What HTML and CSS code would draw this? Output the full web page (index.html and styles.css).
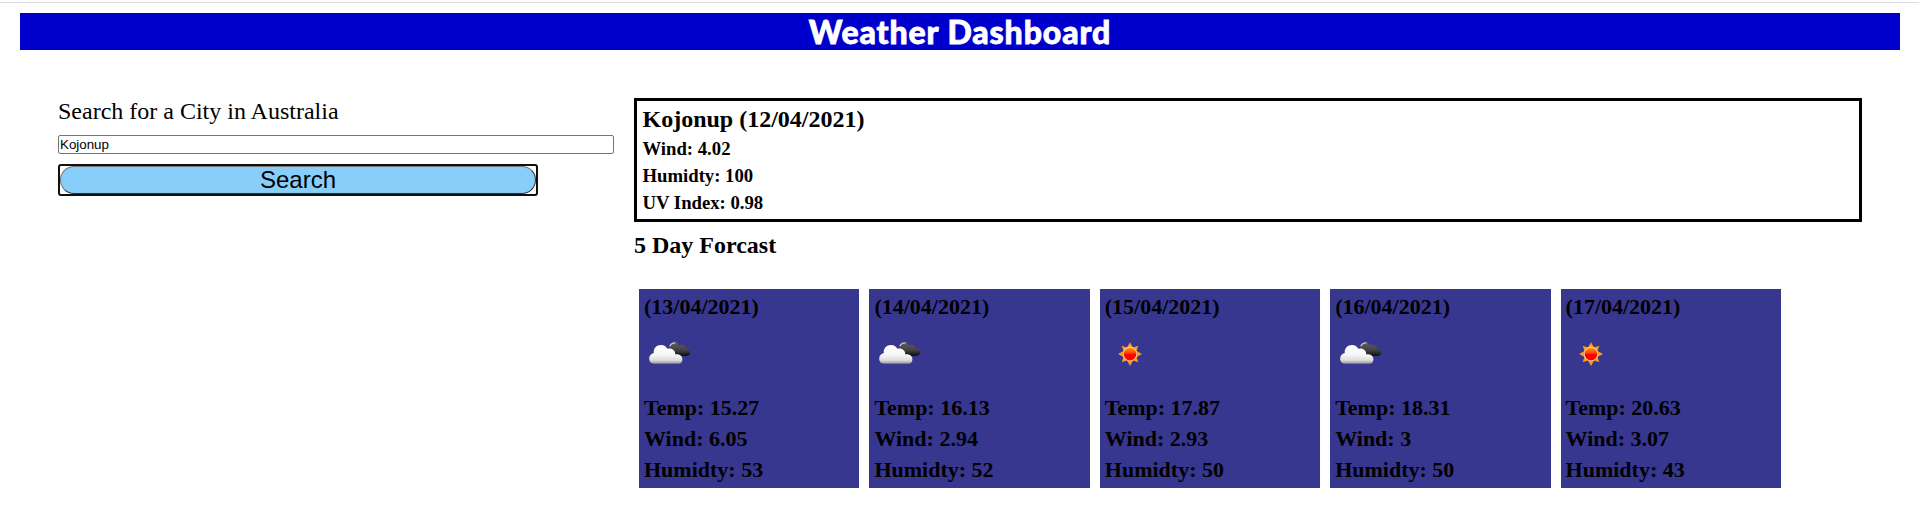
FILE: index.html
```html
<!DOCTYPE html>
<html lang="en">
<head>
<meta charset="utf-8">
<title>Weather Dashboard</title>
<link rel="stylesheet" href="styles.css">
</head>
<body>
<svg class="defs" width="0" height="0" aria-hidden="true">
  <defs>
    <linearGradient id="white-cloud" x1="0" y1="0" x2="0" y2="1">
      <stop offset="0" stop-color="#fff"/><stop offset=".5" stop-color="#f8f8f8"/>
      <stop offset=".8" stop-color="#ddd"/><stop offset=".93" stop-color="#aaa"/><stop offset="1" stop-color="#666"/>
    </linearGradient>
    <linearGradient id="dark-cloud" x1="0" y1="0" x2="0" y2="1">
      <stop offset="0" stop-color="#606060"/><stop offset=".6" stop-color="#404040"/><stop offset="1" stop-color="#0c0c0c"/>
    </linearGradient>
    <linearGradient id="sun-core" x1="0" y1="0" x2="0" y2="1">
      <stop offset="0" stop-color="#ff9a00"/><stop offset=".4" stop-color="#ff4a00"/><stop offset=".55" stop-color="#f00"/>
    </linearGradient>
    <symbol id="clouds" viewBox="0 0 50 50">
      <path fill="url(#dark-cloud)" d="M25 17.5C26 14.5 27.8 13.2 30 13.2C32.5 13.2 34.3 14.3 35.2 16.2C38 14.8 41.4 16.2 42 19.3C45 19.6 46.6 21.4 46.4 23.6C46.2 25.6 44.6 27 42 27H32Z"/>
      <path fill="none" stroke="#c8c8c8" stroke-width="1.2" d="M25.8 17.2C27 14.6 28.5 13.6 31.5 13.8"/>
      <path fill="url(#white-cloud)" d="M10.5 35C7.2 35 5.2 32.8 5.2 29.6C5.2 26.5 7 24.4 9.8 23.9C9.2 19.2 12.6 15.9 17 15.9C20 15.9 22.2 17.2 23.3 19.8C27.6 18.7 31.6 21.3 31.2 25.4C35.4 25 38.4 27 38.4 30.5C38.4 33.2 36.6 35 34 35Z"/>
    </symbol>
    <symbol id="sun" viewBox="0 0 50 50">
      <path fill="#f99b1c" d="M25 13.2 28 18.6 33.3 16.7 31.5 22 37 25 31.5 28 33.3 33.3 28 31.5 25 37 22 31.5 16.7 33.3 18.5 28 13 25 18.5 22 16.7 16.7 22 18.6Z"/>
      <circle cx="25" cy="25" r="7.2" fill="#ffe6b8"/>
      <circle cx="25" cy="25" r="6.4" fill="url(#sun-core)"/>
    </symbol>
  </defs>
</svg>
<header class="banner"><h1>Weather Dashboard</h1></header>
<main class="layout">
  <form class="search">
    <label class="search-label" for="city">Search for a City in Australia</label>
    <input class="search-input" id="city" type="text" value="Kojonup">
    <div class="focus-ring"><button class="search-button" type="button">Search</button></div>
  </form>
  <div class="results">
    <section class="current">
      <h2>Kojonup (12/04/2021)</h2>
      <p>Wind: 4.02</p>
      <p>Humidty: 100</p>
      <p>UV Index: 0.98</p>
    </section>
    <h2 class="forecast-title">5 Day Forcast</h2>
    <section class="forecast">
      <article class="day"><p>(13/04/2021)</p><svg class="icon"><use href="#clouds"/></svg><p>Temp: 15.27</p><p>Wind: 6.05</p><p>Humidty: 53</p></article>
      <article class="day"><p>(14/04/2021)</p><svg class="icon"><use href="#clouds"/></svg><p>Temp: 16.13</p><p>Wind: 2.94</p><p>Humidty: 52</p></article>
      <article class="day"><p>(15/04/2021)</p><svg class="icon"><use href="#sun"/></svg><p>Temp: 17.87</p><p>Wind: 2.93</p><p>Humidty: 50</p></article>
      <article class="day"><p>(16/04/2021)</p><svg class="icon"><use href="#clouds"/></svg><p>Temp: 18.31</p><p>Wind: 3</p><p>Humidty: 50</p></article>
      <article class="day"><p>(17/04/2021)</p><svg class="icon"><use href="#sun"/></svg><p>Temp: 20.63</p><p>Wind: 3.07</p><p>Humidty: 43</p></article>
    </section>
  </div>
</main>
</body>
</html>
```
FILE: styles.css
```css
* { box-sizing: border-box; }
html { border-top: 2px solid #fff; background: #fff; }
body {
  margin: 0;
  border-top: 1px solid #dadce0;
  padding: 10px 19px 0 20px;
  font-family: "Liberation Serif", "Times New Roman", serif;
  color: #000;
}
h1, h2, p { margin: 0; }
.defs { position: absolute; }
.banner {
  height: 37px;
  background: #0000cd;
  color: #fff;
  text-align: center;
}
.banner h1 {
  font: 900 32px/38px Lato, "Gill Sans", sans-serif;
  letter-spacing: 0.9px;
  -webkit-text-stroke: 0.8px #fff;
}
.layout {
  display: flex;
  gap: 20px;
  padding: 46px 38px 0;
}
.search {
  width: 556px;
  display: flex;
  flex-direction: column;
  align-items: flex-start;
}
.search-label { font-size: 24px; line-height: 30px; }
.search-input {
  width: 100%;
  height: 19px;
  margin: 9px 0 10px;
  padding: 0 1px;
  border: 1px solid #767676;
  border-radius: 2px;
  font: 13.333px "Liberation Sans", Arial, sans-serif;
}
.focus-ring {
  width: 480px;
  height: 32px;
  border: 2px solid #101010;
  border-radius: 3px;
}
.search-button {
  display: block;
  width: 476px;
  height: 28px;
  padding: 0;
  border: 1px solid;
  border-color: #767676 #303030 #303030 #767676;
  border-radius: 15px;
  background: #87cefa;
  font: 24px/26px "Liberation Sans", Arial, sans-serif;
  color: #000;
}
.results { width: 1228px; padding-top: 2px; }
.current {
  height: 124px;
  border: 3px solid #000;
  padding: 3px 5.5px;
}
.current h2 { font-size: 24px; line-height: 30px; margin-bottom: 1px; }
.current p { font-size: 18.72px; line-height: 27px; font-weight: bold; }
.forecast-title { margin: 8px 0 29px; font-size: 24px; line-height: 30px; }
.forecast { display: flex; gap: 10px; padding-left: 5px; }
.day {
  width: 220.4px;
  height: 199px;
  padding: 2px 5px 3px;
  background: #37378f;
  font-size: 22px;
  line-height: 31px;
  font-weight: bold;
}
.icon { display: block; width: 50px; height: 50px; margin: 7px 0 13px; }
```
